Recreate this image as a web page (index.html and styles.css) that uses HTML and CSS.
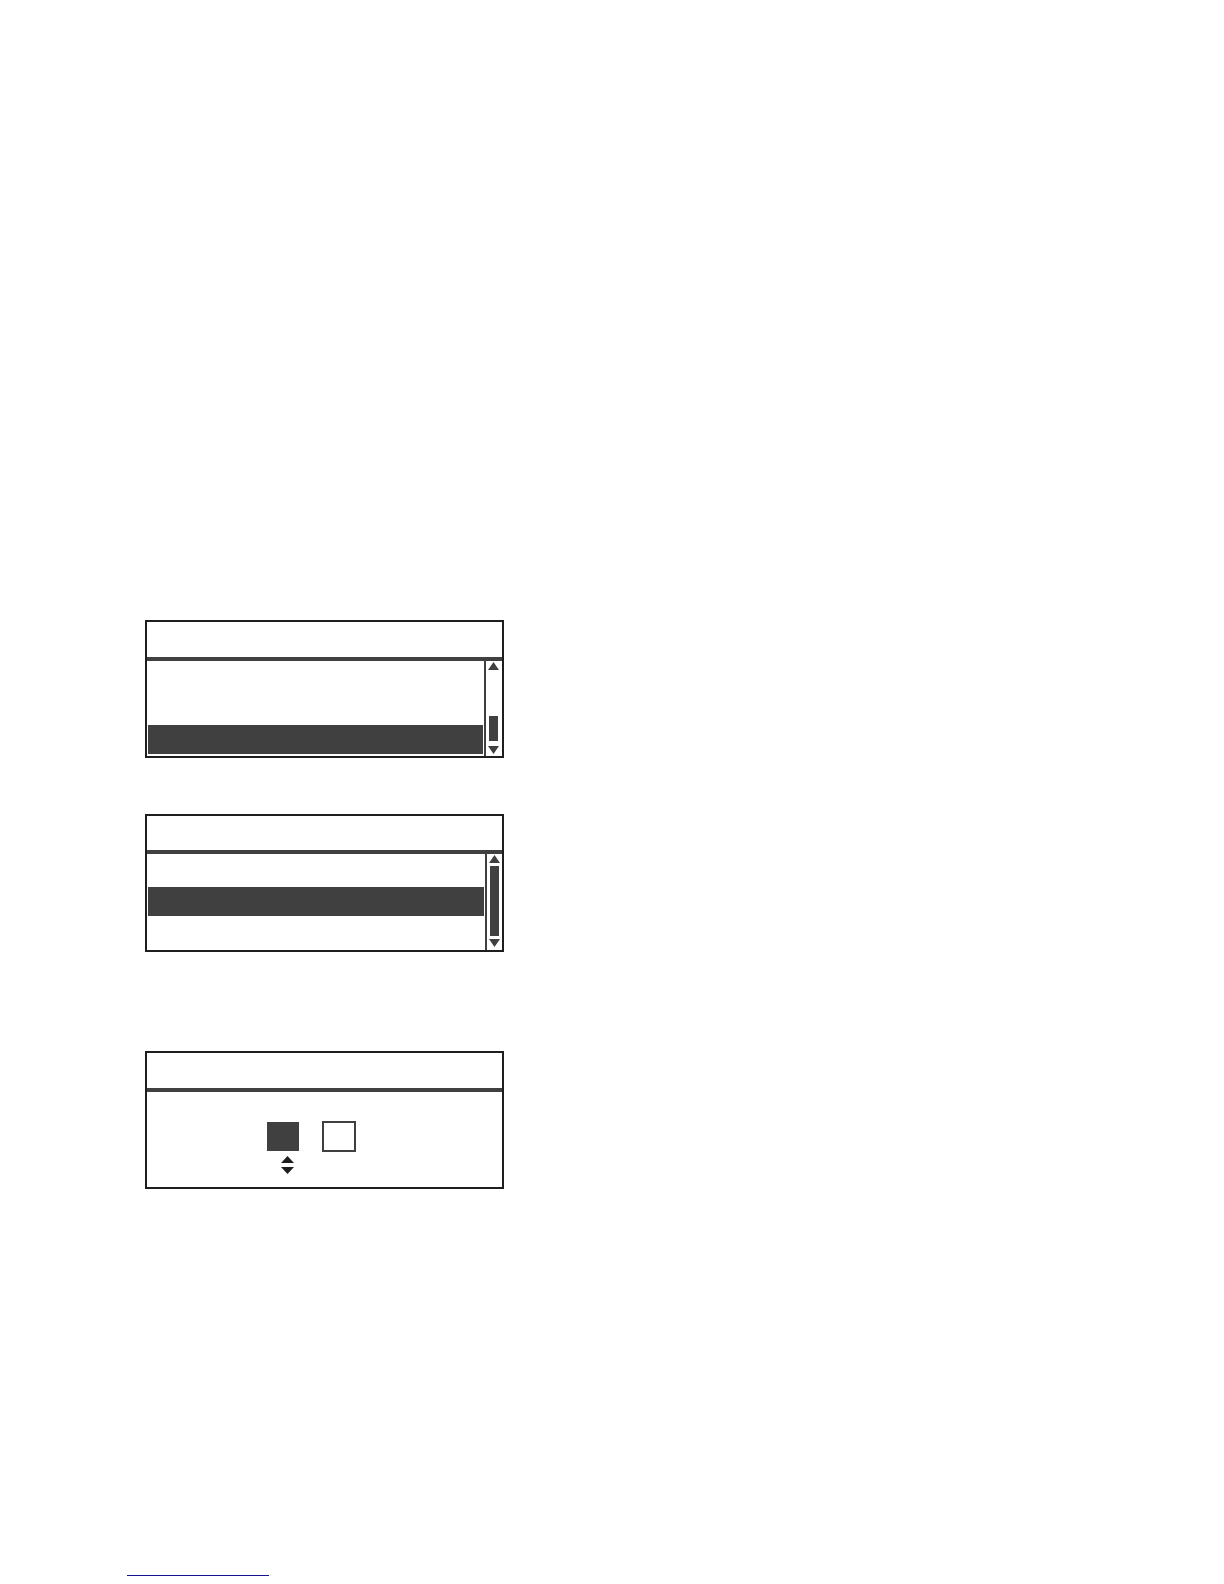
FILE: index.html
```html
<!DOCTYPE html>
<html lang="en">
<head>
  <meta charset="UTF-8" />
  <title>Display Screens</title>
  <link rel="stylesheet" href="styles.css">
</head>
<body>

<main>
  <!-- list, last row selected -->
  <section class="screen">
    <div class="title"></div>
    <div class="content">
      <ul class="rows">
        <li></li>
        <li></li>
        <li class="selected"></li>
      </ul>
      <div class="scrollbar">
        <button type="button" aria-label="Scroll up"><svg viewBox="0 0 11 8"><path d="M5.5 0L11 8H0z"/></svg></button>
        <div class="track track-end"><div class="thumb"></div></div>
        <button type="button" aria-label="Scroll down"><svg viewBox="0 0 11 8"><path d="M0 0H11L5.5 8z"/></svg></button>
      </div>
    </div>
  </section>

  <!-- list, middle row selected -->
  <section class="screen screen-full">
    <div class="title"></div>
    <div class="content">
      <ul class="rows">
        <li></li>
        <li class="selected"></li>
        <li></li>
      </ul>
      <div class="scrollbar">
        <button type="button" aria-label="Scroll up"><svg viewBox="0 0 11 8"><path d="M5.5 0L11 8H0z"/></svg></button>
        <div class="track"><div class="thumb"></div></div>
        <button type="button" aria-label="Scroll down"><svg viewBox="0 0 11 8"><path d="M0 0H11L5.5 8z"/></svg></button>
      </div>
    </div>
  </section>

  <!-- two value fields -->
  <section class="screen screen-values">
    <div class="title"></div>
    <div class="values">
      <div class="fields">
        <input type="text" class="field active" aria-label="First value">
        <input type="text" class="field" aria-label="Second value">
      </div>
      <div class="stepper">
        <button type="button" aria-label="Increase"><svg viewBox="0 0 13 7"><path d="M6.5 0L13 7H0z"/></svg></button>
        <button type="button" aria-label="Decrease"><svg viewBox="0 0 13 7"><path d="M0 0H13L6.5 7z"/></svg></button>
      </div>
    </div>
  </section>
</main>

<footer>
  <a href="#" class="footer-link" aria-label="Back to top"></a>
</footer>

</body>
</html>
```
FILE: styles.css
```css
* {
  box-sizing: border-box;
}
body {
  font-family: "Liberation Sans", Arial, sans-serif;
  margin: 0;
  padding: 620px 20px 8px 127px;
  background-color: #fff;
}
main {
  padding-left: 18px;
}
button {
  display: block;
  padding: 0;
  border: 0;
  background: none;
}
svg {
  display: block;
  width: 100%;
  fill: #404040;
}

.screen {
  width: 100%;
  max-width: 359px;
  border: 2px solid #1e1e20;
}
.title {
  height: 39px;
  border-bottom: 4px solid #404040;
}
.content {
  display: flex;
}
.rows {
  flex: 1;
  display: grid;
  gap: 3px;
  margin: 0;
  padding: 0 1px 2px;
  list-style: none;
}
.rows li {
  height: 29px;
}
.rows .selected {
  background-color: #404040;
}

.scrollbar {
  display: flex;
  flex-direction: column;
  width: 18px;
  padding: 1px 3px 2px 2px;
  border-left: 2px solid #404040;
}
.scrollbar button {
  width: 11px;
  height: 8px;
}
.track {
  flex: 1;
  display: flex;
  flex-direction: column;
  width: 11px;
  padding: 3px 1px;
}
.thumb {
  flex: 1;
  background-color: #404040;
}
.track-end {
  justify-content: flex-end;
  padding-bottom: 5px;
}
.track-end .thumb {
  flex: none;
  height: 25px;
}

.screen-full {
  margin-top: 56px;
}
.screen-full .title {
  height: 38px;
}
.screen-full .rows {
  padding-top: 1px;
}
.screen-full .scrollbar {
  width: 17px;
  padding: 1px 2px 3px;
}

.screen-values {
  margin-top: 99px;
}
.values {
  padding: 29px 0 13px 120px;
}
.fields {
  display: flex;
  align-items: center;
  gap: 23px;
}
.field {
  width: 34px;
  height: 31px;
  padding: 0;
  border: 2px solid #404040;
  background-color: #fff;
  text-align: center;
}
.field.active {
  width: 32px;
  height: 29px;
  background-color: #404040;
  color: #fff;
}
.stepper {
  display: grid;
  gap: 4px;
  width: 13px;
  margin: 4px 0 0 14px;
}
.stepper button {
  height: 7px;
}
.stepper svg {
  fill: #1e1e20;
}

footer {
  margin-top: 371px;
}
.footer-link {
  display: block;
  width: 142px;
  height: 16px;
  border-bottom: 1px solid #14148c;
}
```
